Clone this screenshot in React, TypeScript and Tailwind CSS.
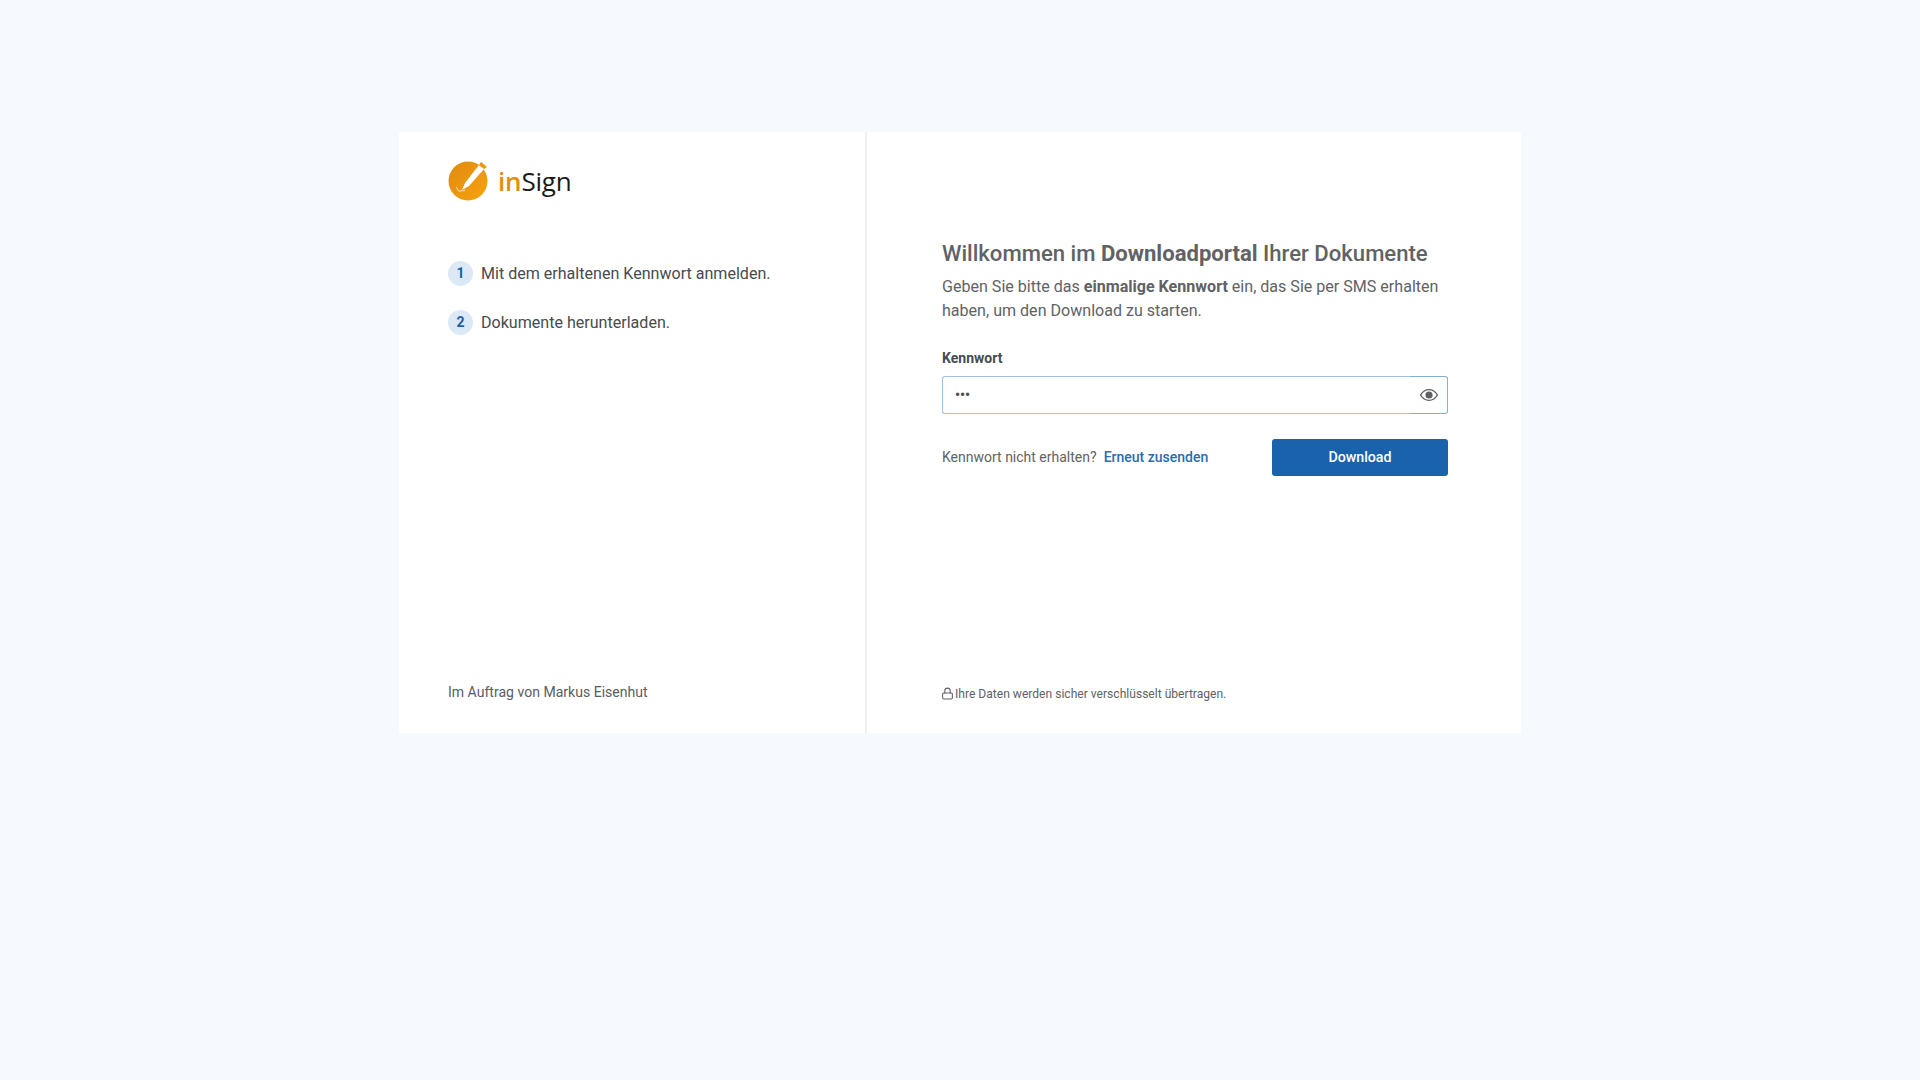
import { Lock } from 'lucide-react';

const font = { fontFamily: 'Roboto, sans-serif' };

function Logo() {
  return (
    <div className="flex items-center gap-[10px]">
      <svg width="40" height="40" viewBox="0 0 40 40">
        <defs>
          <linearGradient id="logoFill" x1="0" y1="0" x2="1" y2="1">
            <stop offset="0" stopColor="#e08a12" />
            <stop offset="1" stopColor="#f7a30c" />
          </linearGradient>
        </defs>
        <circle cx="20" cy="20" r="19.5" fill="url(#logoFill)" />
        <path d="M31 4 L36 8 L21 25 L14 29 L17 22 Z" fill="#fff" />
        <path d="M31 4 L33 1 L39 6 L36 8 Z" fill="url(#logoFill)" />
        <path d="M8 26 C10 28 10 31 12 30 C13 29 14 31 17 29" fill="none" stroke="#fff" strokeWidth="0.8" />
      </svg>
      <span
        className="text-[26px] font-medium leading-none tracking-[-0.2px] text-[#1a1a1a]"
        style={{ fontFamily: '"Open Sans", sans-serif' }}
      >
        <span className="font-semibold text-[#e48e10]">in</span>Sign
      </span>
    </div>
  );
}

function Step({ n, label }: { n: number; label: string }) {
  return (
    <div className="flex h-[25px] items-center gap-[8px]">
      <div className="flex h-[25px] w-[25px] items-center justify-center rounded-full bg-[#dbe8f5] text-[14px] font-bold text-[#1c5fa3]">
        {n}
      </div>
      <span className="pt-[2px] text-[16.07px] text-[#484b50]">{label}</span>
    </div>
  );
}

function EyeIcon() {
  return (
    <svg width="20" height="20" viewBox="0 0 20 20" className="text-[#5c5f63]">
      <path
        d="M1.5 10 C4 6 7 4.6 10 4.6 C13 4.6 16 6 18.5 10 C16 14 13 15.4 10 15.4 C7 15.4 4 14 1.5 10 Z"
        fill="none"
        stroke="currentColor"
        strokeWidth="1.4"
      />
      <circle cx="10" cy="10" r="3.6" fill="currentColor" />
    </svg>
  );
}

export default function App() {
  return (
    <div className="min-h-[1080px] bg-[#f6f9fe] pt-[132px]" style={font}>
      <div className="mx-auto flex h-[601px] w-[1122px] bg-white">
        <div className="flex w-[468px] flex-col border-r-2 border-[#eef0f4] pb-[30px] pl-[49px] pt-[29px]">
          <Logo />
          <div className="mt-[60px] flex flex-col gap-[24px]">
            <Step n={1} label="Mit dem erhaltenen Kennwort anmelden." />
            <Step n={2} label="Dokumente herunterladen." />
          </div>
          <p className="mt-auto text-[14.05px] text-[#5a5d61]">Im Auftrag von Markus Eisenhut</p>
        </div>
        <div className="flex flex-1 flex-col pb-[30px] pl-[75px] pr-[73px] pt-[107px]">
          <h1 className="text-[22.1px] font-medium leading-[28px] text-[#616265]">
            Willkommen im <span className="font-bold">Downloadportal</span> Ihrer Dokumente
          </h1>
          <p className="mt-[8px] text-[16.07px] leading-[24px] text-[#616265]">
            Geben Sie bitte das <span className="font-bold">einmalige Kennwort</span> ein, das Sie per SMS erhalten
            haben, um den Download zu starten.
          </p>
          <label className="mt-[25px] text-[14px] font-bold leading-[20px] text-[#484b50]">Kennwort</label>
          <div className="mt-[8px] flex h-[38px]">
            <div className="flex flex-1 items-center rounded-l-[3px] border-y border-l border-[#9cc3e3] bg-white pl-[12px]">
              <span className="text-[14px] font-bold leading-none text-[#484b50]">•••</span>
            </div>
            <div className="flex w-[38px] items-center justify-center rounded-r-[3px] border-y border-r border-[#7fb0d8] bg-white">
              <EyeIcon />
            </div>
          </div>
          <div className="mt-[25px] flex items-center justify-between">
            <p className="text-[14px] text-[#616265]">
              Kennwort nicht erhalten?
              <a className="ml-[7px] font-medium text-[#2a6cb0]">Erneut zusenden</a>
            </p>
            <button className="h-[37px] w-[176px] rounded-[3px] bg-[#1a62ab] text-[14.2px] font-medium text-white">
              Download
            </button>
          </div>
          <div className="mt-auto flex items-center gap-[1px] text-[12.08px] text-[#616265]">
            <Lock size={13} className="-ml-[1px]" />
            <span>Ihre Daten werden sicher verschlüsselt übertragen.</span>
          </div>
        </div>
      </div>
    </div>
  );
}
